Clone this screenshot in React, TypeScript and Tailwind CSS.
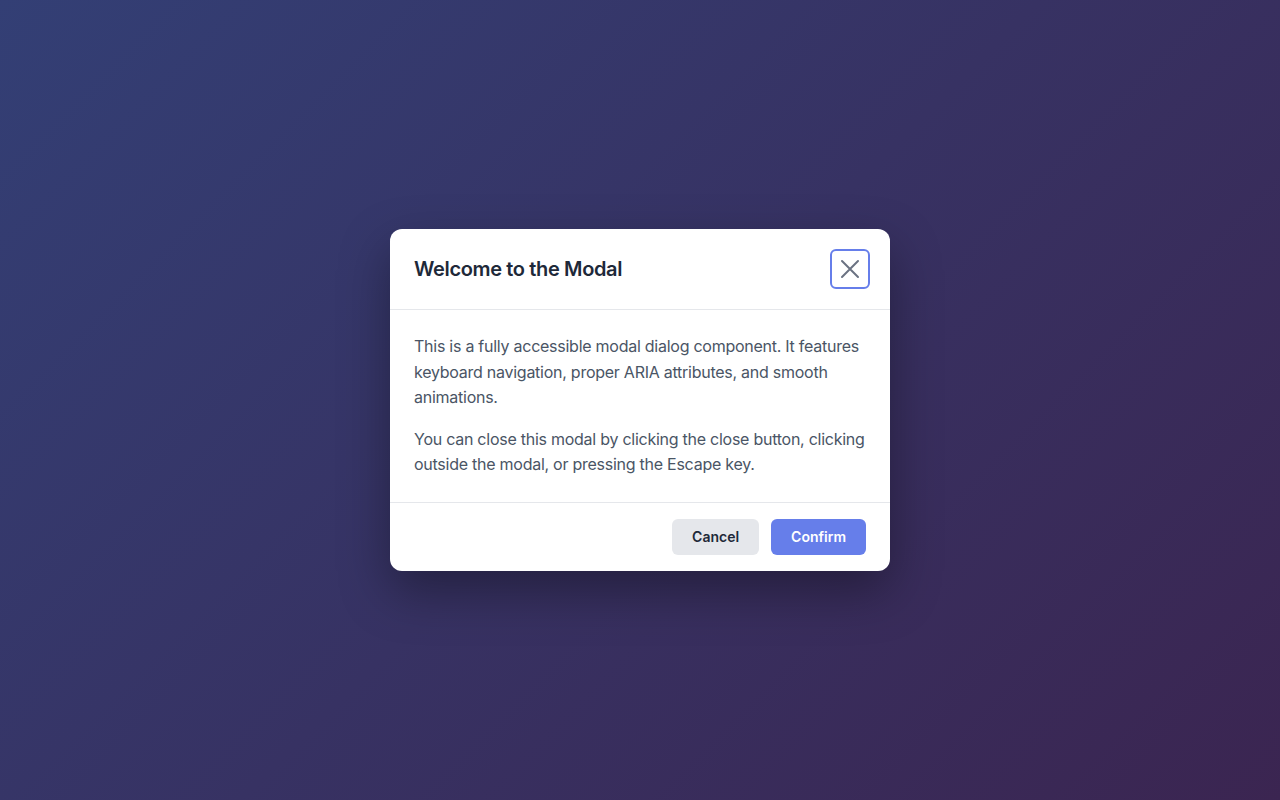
export default function App() {
  return (
    <div
      className="min-h-screen w-full flex items-center justify-center bg-[linear-gradient(135deg,#333f75_0%,#3b2551_100%)]"
      style={{ fontFamily: "Inter, 'Noto Sans', sans-serif" }}
    >
      <div
        role="dialog"
        aria-modal="true"
        aria-labelledby="modal-title"
        className="w-[500px] bg-white rounded-xl shadow-[0_20px_50px_rgba(0,0,0,0.35)] overflow-hidden"
      >
        <div className="flex items-center justify-between pl-6 pr-5 py-5 border-b border-gray-200">
          <h2 id="modal-title" className="text-xl font-semibold tracking-[-0.018em] text-gray-800">
            Welcome to the Modal
          </h2>
          <button
            aria-label="Close modal"
            className="w-10 h-10 flex items-center justify-center rounded-md border-2 border-[#667eea] text-gray-500"
          >
            <svg width="20" height="20" viewBox="0 0 20 20" fill="none" stroke="currentColor" strokeWidth="2" strokeLinecap="round">
              <path d="M2 2L18 18M18 2L2 18" />
            </svg>
          </button>
        </div>
        <div className="p-6 text-base leading-[1.6] tracking-[-0.016em] text-gray-600">
          <p className="mb-4">
            This is a fully accessible modal dialog component. It features keyboard navigation, proper ARIA attributes, and smooth animations.
          </p>
          <p>
            You can close this modal by clicking the close button, clicking outside the modal, or pressing the Escape key.
          </p>
        </div>
        <div className="flex justify-end gap-3 px-6 py-4 border-t border-gray-200">
          <button className="px-5 py-2 rounded-md bg-gray-200 text-gray-800 text-sm font-semibold">Cancel</button>
          <button className="px-5 py-2 rounded-md bg-[#667eea] text-white text-sm font-semibold">Confirm</button>
        </div>
      </div>
    </div>
  );
}
